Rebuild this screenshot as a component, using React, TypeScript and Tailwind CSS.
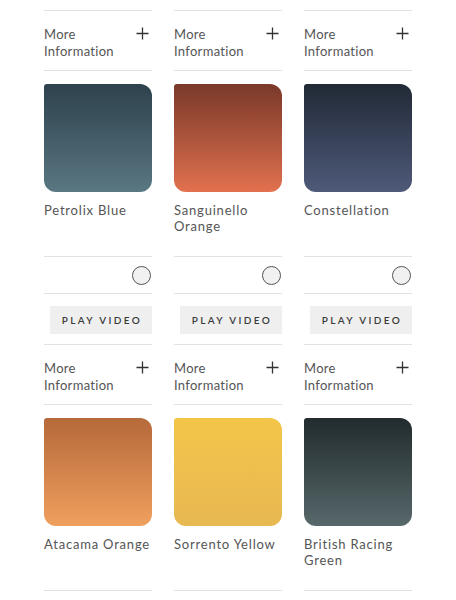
const colors = [
  { name: "Petrolix Blue", cls: "bg-gradient-to-b from-[#2e424d] to-[#5a7882]" },
  { name: "Sanguinello Orange", cls: "bg-gradient-to-b from-[#7a392a] to-[#e2714f]" },
  { name: "Constellation", cls: "bg-gradient-to-b from-[#222a37] to-[#4f5a7a]" },
  { name: "Atacama Orange", cls: "bg-gradient-to-b from-[#b6693a] to-[#f0a05e]" },
  { name: "Sorrento Yellow", cls: "bg-gradient-to-b from-[#f3c649] to-[#e8b852]" },
  { name: "British Racing Green", cls: "bg-gradient-to-b from-[#222c2e] to-[#58696b]" },
];

function PlusIcon() {
  return (
    <svg width="13" height="13" viewBox="0 0 13 13" className="mt-[1px] mr-[3px] shrink-0">
      <path d="M6.5 0.5v12M0.5 6.5h12" stroke="#333" strokeWidth="1.3" fill="none" />
    </svg>
  );
}

function ColorCard({ name, cls }: { name: string; cls: string }) {
  return (
    <div className="flex flex-col">
      <div className="h-px bg-[#e2e2e2]" />
      <div className="flex justify-between items-start pt-[15px] pb-[10px] h-[59px]">
        <p className="text-[13px] leading-[17px] text-[#555] tracking-[0.3px]">
          More
          <br />
          Information
        </p>
        <PlusIcon />
      </div>
      <div className="h-px bg-[#e2e2e2]" />
      <div className={`mt-[13px] h-[108px] rounded-[12px] rounded-tl-[3px] ${cls}`} />
      <div className="h-[64px] pt-[10px]">
        <p className="text-[13px] leading-[16px] text-[#555] tracking-[0.8px]">{name}</p>
      </div>
      <div className="h-px bg-[#e2e2e2]" />
      <div className="h-[36px] flex items-center justify-end pr-[1px]">
        <div className="w-[19px] h-[19px] rounded-full border-[1.5px] border-[#555] bg-[#f1f1f1]" />
      </div>
      <div className="h-px bg-[#e2e2e2]" />
      <button className="mt-[12px] ml-[6px] h-[28px] bg-[#efefef] text-[10px] font-semibold tracking-[2.4px] text-[#3a3a3a] flex items-center justify-center pl-[2px]">
        PLAY VIDEO
      </button>
      <div className="h-[10px]" />
    </div>
  );
}

export default function App() {
  return (
    <div className="bg-white w-[456px] h-[600px] overflow-hidden pt-[10px]" style={{ fontFamily: "Lato, 'Noto Sans', sans-serif" }}>
      <div className="mx-[44px] grid grid-cols-3 gap-x-[22px]">
        {colors.map((c) => (
          <ColorCard key={c.name} name={c.name} cls={c.cls} />
        ))}
      </div>
    </div>
  );
}
